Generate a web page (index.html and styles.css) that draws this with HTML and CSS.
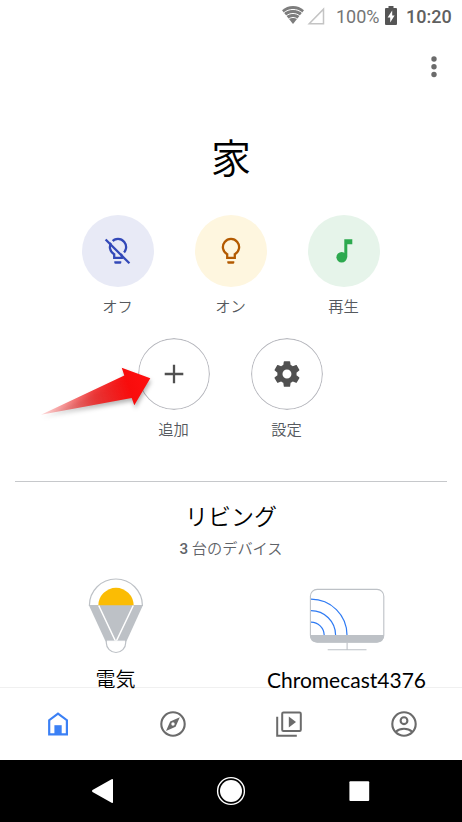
FILE: index.html
```html
<!DOCTYPE html>
<html lang="ja">
<head>
<meta charset="utf-8">
<title>Home</title>
<link rel="stylesheet" href="styles.css">
</head>
<body>
<div class="phone">
  <header class="status">
    <svg class="wifi" width="22" height="18" viewBox="0 0 22 18">
      <path fill="#7d7d7d" d="M11 18 0 4.3C6-1.4 16-1.4 22 4.3z"/>
      <path fill="none" stroke="#fff" stroke-width="1" d="M1.6 6.9c5.4-4.6 13.4-4.6 18.8 0M4 10.1c4-3.5 10-3.5 14 0M6.4 13.2c2.7-2.3 6.5-2.3 9.2 0"/>
    </svg>
    <svg class="signal" width="18" height="18" viewBox="0 0 18 18"><path fill="none" stroke="#c4c4c4" stroke-width="1.5" d="M2.2 16.7H16.5V2.2z"/></svg>
    <span class="percent">100%</span>
    <svg class="battery" width="12" height="19" viewBox="0 0 12 19">
      <path fill="#555" d="M3.5 0h5v2H11q1 0 1 1v15q0 1-1 1H1q-1 0-1-1V3q0-1 1-1h2.500z"/>
      <path fill="#fff" d="M7.200 4.600 2.600 11.400h2.600v5L9.600 9.400H7.200z"/>
    </svg>
    <span class="clock">10:20</span>
  </header>
  <div class="toolbar">
    <svg width="6" height="22" viewBox="0 0 6 22" fill="#6b6b6b"><circle cx="3" cy="3" r="2.700"/><circle cx="3" cy="10.800" r="2.700"/><circle cx="3" cy="18.500" r="2.700"/></svg>
  </div>
  <main class="content">
    <h1 class="title">家</h1>
    <div class="actions">
      <div class="action">
        <svg class="disc blue" viewBox="0 0 72 72">
          <path class="line" d="M32.200 42.850V39.200a8.100 8.100 0 1 1 7.600 0v3.650z"/>
          <path fill="currentColor" d="M32.300 46.300h7v1.200q0 1.200-1.200 1.200h-4.600q-1.200 0-1.200-1.200z"/>
          <path stroke="#e8eaf6" stroke-width="2.600" d="M25.500 22.700 49 46.200"/>
          <path class="line" d="M23.600 24.500 47.400 48.300"/>
        </svg>
        <span>オフ</span>
      </div>
      <div class="action">
        <svg class="disc amber" viewBox="0 0 72 72">
          <path class="line" d="M32.200 42.850V39.200a8.100 8.100 0 1 1 7.600 0v3.650z"/>
          <path fill="currentColor" d="M32.300 46.300h7v1.200q0 1.200-1.200 1.200h-4.600q-1.200 0-1.200-1.200z"/>
        </svg>
        <span>オン</span>
      </div>
      <div class="action">
        <svg class="disc green" viewBox="0 0 72 72" fill="currentColor">
          <circle cx="33.700" cy="42.300" r="5.300"/><path d="M36.300 24.300h8v5h-5v13h-3z"/>
        </svg>
        <span>再生</span>
      </div>
    </div>
    <div class="actions second">
      <div class="action">
        <svg class="disc outlined" viewBox="0 0 72 72"><circle class="rim" cx="36" cy="36" r="35.400"/><path class="line" d="M36 26.700v18.600M26.700 36h18.600"/></svg>
        <span>追加</span>
        <svg class="arrow" width="120" height="60" viewBox="36 360 120 60">
          <defs><linearGradient id="fade" gradientUnits="userSpaceOnUse" x1="40" y1="415" x2="150" y2="378">
            <stop offset="0" stop-color="#f01818" stop-opacity=".15"/><stop offset=".5" stop-color="#ee1c1c" stop-opacity=".85"/><stop offset=".8" stop-color="#f80c0c"/><stop offset="1" stop-color="#ff1010"/>
          </linearGradient></defs>
          <path fill="url(#fade)" d="M41 414.700 124.300 375.500 121.700 367.700 150.300 378.300 134.300 405.300 131.700 398z"/>
        </svg>
      </div>
      <div class="action">
        <svg class="disc outlined" viewBox="0 0 72 72"><circle class="rim" cx="36" cy="36" r="35.400"/>
          <path fill="currentColor" transform="translate(20.600 20.600) scale(1.280)" d="M19.430 12.980c.04-.32.07-.64.07-.98s-.03-.66-.07-.98l2.110-1.650c.19-.15.24-.42.12-.64l-2-3.460c-.12-.22-.39-.3-.61-.22l-2.490 1c-.52-.4-1.080-.73-1.690-.98l-.38-2.650C14.460 2.180 14.250 2 14 2h-4c-.25 0-.46.18-.49.42l-.38 2.650c-.61.25-1.170.59-1.690.98l-2.490-1c-.23-.09-.49 0-.61.22l-2 3.460c-.13.22-.07.49.12.64l2.110 1.650c-.04.32-.07.65-.07.98s.03.66.07.98l-2.110 1.650c-.19.15-.24.42-.12.64l2 3.460c.12.22.39.3.61.22l2.490-1c.52.4 1.080.73 1.690.98l.38 2.650c.03.24.24.42.49.42h4c.25 0 .46-.18.49-.42l.38-2.650c.61-.25 1.170-.59 1.690-.98l2.490 1c.23.09.49 0 .61-.22l2-3.460c.12-.22.07-.49-.12-.64zM12 15.500a3.500 3.500 0 1 1 0-7 3.500 3.500 0 0 1 0 7z"/>
        </svg>
        <span>設定</span>
      </div>
    </div>
    <section class="room">
      <h2>リビング</h2>
      <p class="count"><b>3</b> 台のデバイス</p>
      <div class="devices">
        <div class="device">
          <svg width="60" height="80" viewBox="85.600 575 60 80">
            <path fill="#fff" stroke="#bdc1c6" stroke-width="1.200" d="M89 605.500a26.500 26.500 0 0 1 53 0z"/>
            <path fill="#fbbc04" d="M97.900 605.500a17.700 17.700 0 0 1 35.400 0z"/>
            <path fill="#bdc1c6" d="M88.600 605.500h53.800L126 641.500h-20.800z"/>
            <path fill="none" stroke="#fff" stroke-width="1.500" d="M98.300 605.500 115.500 642 132.900 605.500"/>
            <path fill="#fff" stroke="#bdc1c6" stroke-width="1.200" d="M105.900 641.300h19.400v1.500a9.700 9.700 0 0 1-19.400 0z"/>
            <path stroke="#fff" stroke-width="1.300" d="M106.500 641.300h18.200"/>
          </svg>
          <span>電気</span>
        </div>
        <div class="device">
          <svg width="80" height="80" viewBox="306.500 575 80 80" fill="none">
            <path fill="#bdc1c6" d="M309.500 635h74q0 7.600-7.600 7.600h-58.800q-7.600 0-7.600-7.600z"/>
            <rect x="309.900" y="589.400" width="73.400" height="52.700" rx="6.800" stroke="#bdc1c6" stroke-width="1.100"/>
            <path stroke="#bdc1c6" stroke-width="1.100" d="M346.600 642.500v7.200M327.200 649.700h38.800"/>
            <path stroke="#2f7bf3" stroke-width="1.200" d="M310.500 622.200a13.200 13.200 0 0 1 13.200 12.800M310.500 610.700a24.600 24.600 0 0 1 24.600 24.300M310.500 599.200a36 36 0 0 1 36 35.800"/>
          </svg>
          <span class="latin">Chromecast4376</span>
        </div>
      </div>
    </section>
  </main>
  <nav class="tabs">
    <svg viewBox="0 0 32 32" fill="none"><path stroke="#3b80f5" stroke-width="2.200" d="M7.200 26.300V12.200L16 5.700l8.900 6.500v14.100z"/><path fill="#3b80f5" d="M12.400 17.200h7.300v9.500h-7.300z"/></svg>
    <svg viewBox="0 0 32 32" fill="none"><circle cx="16" cy="16" r="11.700" stroke="#6b6b6b" stroke-width="2.100"/><path fill="#6b6b6b" fill-rule="evenodd" d="m22.800 9.200-4.200 9.600-9.600 4.200 4.200-9.600zM16 14.300a1.700 1.700 0 1 0 0 3.400 1.700 1.700 0 0 0 0-3.400z"/></svg>
    <svg viewBox="0 0 32 32" fill="none" stroke="#6b6b6b" stroke-width="2"><rect x="9.200" y="4.600" width="18.600" height="18.400" rx="1.200"/><path d="M4.200 8.700v19h19.600"/><path stroke="none" fill="#6b6b6b" d="M15.800 8.400v11l7.200-5.500z"/></svg>
    <svg viewBox="0 0 32 32" fill="none" stroke="#6b6b6b" stroke-width="2.100"><circle cx="16" cy="16" r="11.700"/><circle cx="16" cy="12.700" r="3.400"/><path d="M7.800 23.700c4.400-4 12-4 16.400 0"/></svg>
  </nav>
  <footer class="system">
    <svg viewBox="0 0 32 32"><path fill="#fff" d="M26 5v22q0 1.500-1.400.7L5.500 17q-1.200-1 0-2L24.600 4.300q1.400-.8 1.400.7z"/></svg>
    <svg viewBox="0 0 32 32"><circle cx="16" cy="16" r="13.400" fill="none" stroke="#fff" stroke-width="1.400"/><circle cx="16" cy="16" r="11" fill="#fff"/></svg>
    <svg viewBox="0 0 32 32"><rect x="6.400" y="6.200" width="19.800" height="19.800" rx="1" fill="#fff"/></svg>
  </footer>
</div>
</body>
</html>
```
FILE: styles.css
```css
* { box-sizing: border-box; }
body { margin: 0; background: #fff; font-family: Roboto, "Noto Sans CJK JP", sans-serif; }
svg { display: block; flex: none; }
.phone { width: 462px; height: 822px; display: flex; flex-direction: column; }
.status { height: 32px; flex: none; display: flex; align-items: center; justify-content: flex-end; padding-right: 10px; font-size: 18px; color: #757575; }
.wifi { margin-top: -2px; }
.signal { margin-left: 3px; }
.percent { margin-left: 11px; width: 44px; }
.battery { margin: -2px 0 0 5px; }
.clock { margin-left: 9px; width: 46px; font-weight: 500; white-space: nowrap; color: #606060; }
.toolbar { height: 70px; flex: none; display: flex; justify-content: flex-end; padding: 24px 25px 0 0; }
.content { position: relative; z-index: 1; flex: 1; min-height: 0; }
.title { margin: 0; padding-top: 28px; height: 88px; line-height: 60px; font-size: 40px; font-weight: 350; text-align: center; color: #000; }
.actions { display: flex; justify-content: center; gap: 41px; margin-top: 25px; height: 105px; padding-right: 1px; }
.second { margin-top: 18px; padding-right: 2px; }
.action { position: relative; width: 72px; display: flex; flex-direction: column; align-items: center; font-size: 15.3px; line-height: 20px; color: #55595e; font-weight: 350; }
.action > span { margin-top: 10px; }
.disc { width: 72px; height: 72px; border-radius: 50%; }
.line { fill: none; stroke: currentColor; stroke-width: 2.3; }
.blue { background: #e8eaf6; color: #3349b8; }
.amber { background: #fef6df; color: #b35a00; }
.green { background: #e6f4ea; color: #2da94f; }
.outlined { color: #505050; }
.rim { fill: none; stroke: #b8b9bf; stroke-width: 1.1; }
.arrow { position: absolute; left: -102px; top: 22px; filter: drop-shadow(1px 3px 2px rgba(0, 0, 0, .3)); }
.room { margin: 38px 15px 0; border-top: 1px solid #c6c8cb; text-align: center; }
.room h2 { margin: 18px 0 0; font-size: 23px; line-height: 36px; font-weight: 350; color: #000; }
.count { margin: 2px 0 0; font-size: 15.2px; line-height: 22px; font-weight: 350; color: #5f6368; }
.count b { font-weight: 500; }
.devices { display: grid; grid-template-columns: 1fr 1fr; margin: 15px -15px 0; }
.device { display: flex; flex-direction: column; align-items: center; font-size: 20px; font-weight: 350; color: #000; }
.device span { margin-top: 12px; line-height: 26px; }
.device .latin { margin-top: 12px; font-family: Lato, sans-serif; font-size: 21px; font-weight: 400; }
.tabs { height: 73px; flex: none; border-top: 1px solid #f0f0f0; display: flex; justify-content: space-around; align-items: center; background: #fff; }
.tabs svg { width: 32px; height: 32px; }
.system { height: 62px; flex: none; background: #000; display: flex; justify-content: center; align-items: center; gap: 96px; }
.system svg { width: 32px; height: 32px; }
```
